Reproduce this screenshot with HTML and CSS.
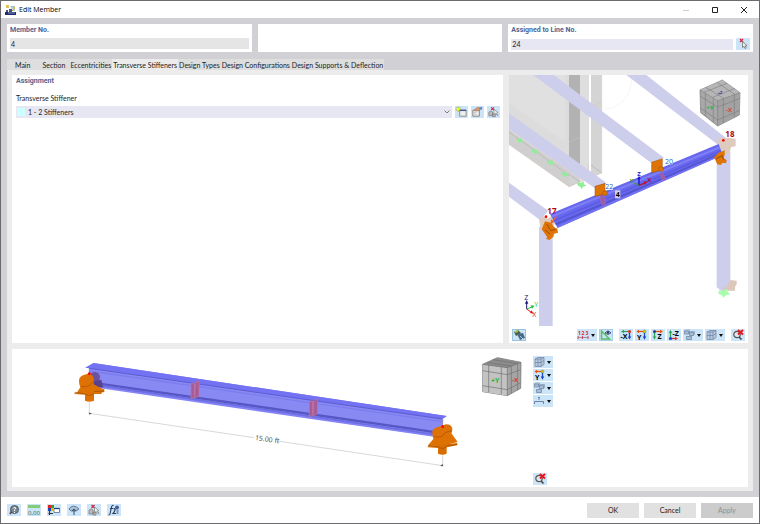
FILE: index.html
```html
<!DOCTYPE html>
<html lang="en">
<head>
<meta charset="utf-8">
<title>Edit Member</title>
<link rel="stylesheet" href="styles.css">
</head>
<body>
<svg class="defs" aria-hidden="true">
  <defs>
    <symbol id="i-pick" viewBox="0 0 14 12"><path d="M4 1l3 3M7 1L4 4" stroke="#d8203a" stroke-width="1.2"/><path d="M6.500 3.500v6l1.500-1.200 1 2.200 1.200-.6-1-2 1.900-.2z" fill="#eee" stroke="#666" stroke-width=".7"/></symbol>
    <symbol id="i-pickobj" viewBox="0 0 14 12"><path d="M2 6l2-1 2 1v4H2zM6 8h3v3H6z" fill="#bbb" stroke="#777" stroke-width=".7"/><path d="M4.500 1l3 3M7.500 1l-3 3" stroke="#d8203a" stroke-width="1.200"/><path d="M7.500 3v6l1.500-1.500 2.500 2.500.7-.8-2-2 1.600-.7z" fill="#eee" stroke="#777" stroke-width=".7"/></symbol>
    <symbol id="i-new" viewBox="0 0 14 12"><path d="M5 4h7v6.500H5z" fill="#eee" stroke="#777" stroke-width=".8"/><path d="M5 3.500h7v1.500H5z" fill="#4a5a98"/><path d="M3.500 0v6M.5 3h6M1.500 1l4 4M5.500 1l-4 4" stroke="#8aa820" stroke-width=".8"/><circle cx="3.500" cy="3" r="1.500" fill="#ff0"/></symbol>
    <symbol id="i-edit" viewBox="0 0 14 12"><path d="M2 4h7v6.500H2z" fill="#eee" stroke="#777" stroke-width=".9"/><path d="M3 6.500h3M3 8.500h3" stroke="#aaa" stroke-width=".6"/><path d="M4 3l3-2 3 .5v2L7 5H4z" fill="#d99a70" stroke="#8a6048" stroke-width=".4"/><path d="M9 1l3-.5v3l-3-.5z" fill="#5a8cc8"/></symbol>
    <symbol id="i-zoomx" viewBox="0 0 14 12"><circle cx="6" cy="5.500" r="3.200" fill="#dce8ee" stroke="#555" stroke-width="1.200"/><path d="M8 8l2.500 2.500" stroke="#444" stroke-width="1.600"/><path d="M7 1l5 4.500M12 1L7 5.500" stroke="#ed1118" stroke-width="1.900"/></symbol>
    <symbol id="i-boxes" viewBox="0 0 14 12"><path d="M1.500 2h4v3h-4zM6.500 3.500h4v3h-4zM3.500 7.500h5v3h-5z" fill="#a9bdd3" stroke="#7189a8" stroke-width=".8"/><path d="M1.500 2l1-1h4v3l-1 1M6.500 3.500l1-1h4v3l-1 1" fill="none" stroke="#7189a8" stroke-width=".6"/></symbol>
    <symbol id="i-cube" viewBox="0 0 14 12"><path d="M2 3l3-1.500h6v7L8 10.500H2zM2 3h6v7.500M8 3l3-1.500M5 3v7.500M2 6.500h6l3-2" fill="#b8c9de" stroke="#7388a8" stroke-width=".8"/></symbol>
    <symbol id="i-yaxis" viewBox="0 0 14 12"><path d="M9 2.500H3" stroke="#e8500c" stroke-width="1.200"/><path d="M4 .7v3.600L1.500 2.500z" fill="#e8500c"/><path d="M9.500 3v5" stroke="#1747cc" stroke-width="1.300"/><path d="M7.700 7.500h3.600L9.500 10.700z" fill="#1747cc"/><circle cx="9.500" cy="2.500" r="1.500" fill="#c0c814" stroke="#776" stroke-width=".4"/><text x="2" y="10.500" class="axis">Y</text></symbol>
  </defs>
</svg>

<div class="window">
  <header class="titlebar">
    <svg class="logo" viewBox="0 0 11 10" aria-hidden="true"><path d="M0 7h11v3H0z" fill="#202c70"/><path d="M1 5h2v2H1zM4 4h3v3H4z" fill="#48557a"/><path d="M1 0h3v3H1z" fill="#d9c25e"/><path d="M5 1h5v5H8z" fill="#a9cbdc"/><path d="M8 1l2 2-3 3" fill="none" stroke="#d6b52c"/><path d="M3 8h7" stroke="#aebadc" stroke-width=".7"/></svg>
    <h1>Edit Member</h1>
    <div class="syskeys">
      <button aria-label="Minimize" disabled><svg viewBox="0 0 8 8"><path d="M1 4.500h6" stroke="#ccc"/></svg></button>
      <button aria-label="Maximize"><svg viewBox="0 0 8 8"><path d="M1.500 1.500h5v5h-5z" fill="none" stroke="#222"/></svg></button>
      <button aria-label="Close"><svg viewBox="0 0 8 8"><path d="M1 1l6 6M7 1L1 7" stroke="#222"/></svg></button>
    </div>
  </header>

  <main class="body">
    <div class="heads">
      <section class="card"><label for="member">Member No.</label><div class="row"><input id="member" class="field readonly" value="4" readonly></div></section>
      <section class="card"></section>
      <section class="card"><label for="line">Assigned to Line No.</label><div class="row"><input id="line" class="field" value="24"><button class="tool" aria-label="Select line"><svg><use href="#i-pick"/></svg></button></div></section>
    </div>

    <nav class="tabs" role="tablist">
      <button role="tab" class="tab wide">Main</button>
      <button role="tab" class="tab medium">Section</button>
      <button role="tab" class="tab">Eccentricities</button>
      <button role="tab" class="tab active" aria-selected="true">Transverse Stiffeners</button>
      <button role="tab" class="tab">Design Types</button>
      <button role="tab" class="tab">Design Configurations</button>
      <button role="tab" class="tab">Design Supports &amp; Deflection</button>
    </nav>

    <div class="page">
      <section class="panel assignment">
        <h2>Assignment</h2>
        <label for="stiffener">Transverse Stiffener</label>
        <div class="row">
          <div class="combo">
            <span class="swatch"></span>
            <select id="stiffener"><option>1 - 2 Stiffeners</option></select>
            <svg class="chevron" viewBox="0 0 6 4" aria-hidden="true"><path d="M.5.5L3 3 5.500.5" fill="none" stroke="#666" stroke-width=".8"/></svg>
          </div>
          <button class="tool narrow" aria-label="New stiffener"><svg><use href="#i-new"/></svg></button>
          <button class="tool narrow" aria-label="Edit stiffener"><svg><use href="#i-edit"/></svg></button>
          <button class="tool narrow" aria-label="Pick stiffener"><svg><use href="#i-pickobj"/></svg></button>
        </div>
      </section>

      <section class="panel model">
        <svg class="scene" viewBox="12 15 717 759" role="img" aria-label="Model view">
          <defs><clipPath id="clip"><path d="M12 15h717v759H12z"/></clipPath></defs>
          <g clip-path="url(#clip)">
            <path d="M12 15h180v335L12 225z" fill="#dcdcdc"/>
            <path d="M12 15h168v200L12 100z" fill="#e0e0e0"/>
            <path d="M12 182l180 122v46L12 222z" fill="#cfcfcf"/>
            <path d="M12 182l180 122 33 28-33 18L12 222z" fill="none" stroke="#dcc4b8" stroke-width="1.500"/>
            <path d="M12 186l180 130" stroke="#b4b4b4" stroke-width="2"/>
            <path d="M192 15h33v320l-33 15z" fill="#b2b2b2"/>
            <path d="M192 260v90l33-15v-50z" fill="#d2d2d2"/>
            <path d="M225 15h27v310l-27 10z" fill="#dedede"/>
            <path d="M258 15h32v294l-32 14z" fill="#d4d4d4"/>
            <path d="M192 350l98-41V15M192 100l33-10M192 215l33-12M258 110l32-12M250 285v55" fill="none" stroke="#d8bfb4" stroke-width="1.500"/>
            <path d="M192 312l33 25M258 285l30 22" stroke="#888"/>
            <path d="M300 118q76-8 82-103" fill="none" stroke="#f0f0f0" stroke-width="2"/>
            <g fill="#90ee98"><path d="M34 205l8 3 8-4 1 7 6 4-9 2-4 4-2-6-6-2z"/><path d="M80 238l8 3 8-4 1 7 6 4-9 2-4 4-2-6-6-2z"/><path d="M126 271l8 3 8-4 1 7 6 4-9 2-4 4-2-6-6-2z"/><path d="M168 306l8 3 8-4 1 7 6 4-9 2-4 4-2-6-6-2z"/><path d="M217 335l10 4 9-5 1 9 8 4-11 3-4 8-4-8-8-3z"/></g>
            <g fill="#cdcdec">
              <path d="M12 130l288 205v20h-30L12 177z"/>
              <path d="M85 15h61l331 248-37 17z"/>
              <path d="M364 15h60l240 190-24 20z"/>
              <path d="M12 338l118 84-25 28L12 380z"/>
              <path d="M635 245h41v405l-22 16-19-14z"/>
              <path d="M102 470h41v298h-41z"/>
            </g>
            <path d="M640 205l30-2 22 3v22l-14 4-5 18-16 4-18-20z" fill="#dfcbbd"/>
            <path d="M670 639l7-9 18 2v11l-5 7v12h-30l-8-8 14-4z" fill="#dcc7bb"/>
            <path d="M642 660l12 3 12-7 2 10 8 7-13 3-8 7-5-8-10-4z" fill="#a8ffab"/>
            <path d="M102 448l14-9 12 7 24-15 8 20-35 35-18-8z" fill="#dfcbbd"/>
            <path d="M135 432l506-210 12 33-495 219z" fill="#6868ee"/>
            <path d="M140 440l504-208" stroke="#8080f6" stroke-width="6"/>
            <path d="M146 452l501-210" stroke="#5c5ce2" stroke-width="5"/>
            <path d="M152 463l499-214" stroke="#5454d0" stroke-width="6"/>
            <path d="M157 471l496-218" stroke="#7474f2" stroke-width="5"/>
            <path d="M286 375l8-3 2 10 6 4v18l-8 3-7-10zM466 312l8-5 1 8 5 4v11h-8l-5-8z" fill="#9a5bb1" stroke="#c0669c"/>
            <g fill="#dd7405" stroke="#9c5206" stroke-width="1.500"><path d="M440 277l32-11v34l-32 8zM270 349l31-9v31l-31 9z"/><circle cx="468" cy="297" r="7"/><circle cx="300" cy="370" r="7"/></g>
            <path d="M627 262l14-14 18-7v14l-4 8 10 8-2 9-10-2-6 7-10-2-5-11zM110 478l10-24 18 4 10 14 9 4 2 12-12 3-2 10-12 9-9-3 2-7z" fill="#dd7405"/>
            <path d="M125 462l12 20 14-4M120 480l15 12M634 266l18-9 4 12" fill="none" stroke="#9a4e02" stroke-width="3"/>
            <path d="M154 440l-12 15" stroke="#f45d27" stroke-width="4"/><path d="M138 448l10 8-11 5z" fill="#f45d27"/>
            <circle cx="655" cy="211" r="4" fill="#f00"/><circle cx="123" cy="440" r="4" fill="#f00"/>
            <path d="M402 346v-20" stroke="#1010d0" stroke-width="4"/><path d="M397 328l5-11 5 11z" fill="#1010d0"/>
            <path d="M402 346l18-7" stroke="#c01032" stroke-width="4"/><path d="M416 334l12 2-9 8z" fill="#c01032"/>
            <path d="M402 346l-17-8" stroke="#44a020" stroke-width="3"/>
            <text x="397" y="319" class="s18 bold" fill="#2222dc">Z</text><text x="374" y="339" class="s18 bold" fill="#309820">Y</text><text x="427" y="337" class="s18 bold" fill="#a01030">X</text>
            <path d="M478 266h25v17h-25zM301 342h23v17h-23z" fill="#fff"/>
            <text x="480" y="282" class="s21" fill="#1868c8">20</text><text x="301" y="358" class="s21" fill="#1868c8">22</text>
            <path d="M330 361h16v24h-16z" fill="#d3d3e6"/><text x="332" y="381" class="s21 bold">4</text>
            <text x="661" y="202" class="s24 bold" fill="#a80c0c">18</text><text x="127" y="431" class="s24 bold" fill="#a80c0c">17</text>
            <path d="M585 60l67-30 53 38-2 67-65 33-51-40z" fill="#a8a8a8" stroke="#777" stroke-width="2"/>
            <path d="M585 60l67-30 53 38-67 24z" fill="#b6b6b6"/>
            <path d="M638 92l67-24-2 67-65 33z" fill="#a2a2a2"/>
            <path d="M585 60l53 32 67-24M638 92v76M601 70v68M625 85v72M655 86v73M688 74v68M585 78l53 33 67-26M587 114l51 36 66-29M602 52l54 33M636 37l53 36M597 67l69-27M623 82l67-27" fill="none" stroke="#747474" stroke-width="1.500"/>
            <text x="604" y="119" class="s18 bold" fill="#29af3f">+Y</text><text x="663" y="126" class="s18 bold" fill="#e63939">-X</text><text x="638" y="72" class="s12 bold" fill="#28289c">+Z</text>
            <path d="M65 717v-18" stroke="#181878" stroke-width="3"/><path d="M60 701l5-11 5 11z" fill="#181878"/>
            <path d="M65 717l16-6" stroke="#22c33a" stroke-width="3"/><path d="M77 706l12 1-8 9z" fill="#22c33a"/>
            <path d="M65 717l14 10" stroke="#e01818" stroke-width="3"/><path d="M79 721l7 10-11-2z" fill="#e01818"/>
            <text x="58" y="691" class="s21" fill="#181878">Z</text><text x="88" y="711" class="s21" fill="#22c33a">Y</text><text x="82" y="741" class="s21" fill="#e01818">X</text>
          </g>
        </svg>
        <div class="toolbar">
          <button class="tool first" aria-label="Synchronize view"><svg viewBox="0 0 14 12"><path d="M.5.5h13v11H.5z" fill="none" stroke="#8fb7d4" stroke-width=".8"/><path d="M2 3l4-2 3 3-5 3z" fill="#4e5c4c"/><path d="M3 3l3-1" stroke="#9fd22b" stroke-width="2"/><path d="M5 5l6-1 2 5-5 2z" fill="#456a87"/><path d="M8 7l3 3" stroke="#adcbe0"/></svg></button>
          <button class="tool drop" aria-label="Numbering"><svg viewBox="0 0 14 12"><path d="M1 8.500h10" stroke="#8c7b88" stroke-width=".8"/><path d="M1 7v3M5.500 7v3M11 7v3" stroke="#d23" stroke-width=".8"/><text x="1" y="6" class="tiny" fill="#d22">1</text><text x="4.500" y="6" class="tiny" fill="#d22">2</text><text x="8.500" y="6" class="tiny" fill="#d22">3</text></svg><i></i></button>
          <button class="tool edge" aria-label="Show dimensions"><svg viewBox="0 0 14 12"><path d="M2.500 2v8h8z" fill="none" stroke="#57bd65" stroke-width="1.500"/><path d="M6 4q3-4 6 0-3 3-6 0z" fill="#d8e1f0" stroke="#3f4d72" stroke-width=".9"/><circle cx="9" cy="3.500" r="1.300" fill="#26306a"/></svg></button>
          <button class="tool group" aria-label="View in X"><svg viewBox="0 0 14 12"><path d="M4 2.500h6" stroke="#2aa456" stroke-width="1.200"/><path d="M5 .8v3.400L2 2.500z" fill="#2aa456"/><path d="M10.500 3v5" stroke="#1747cc" stroke-width="1.300"/><path d="M8.700 7.500h3.600l-1.800 3z" fill="#1747cc"/><circle cx="10.500" cy="2.500" r="1.600" fill="#d83a28"/><text x="1.500" y="10" class="axis">-X</text></svg></button>
          <button class="tool" aria-label="View in Y"><svg><use href="#i-yaxis"/></svg></button>
          <button class="tool" aria-label="View in Z"><svg viewBox="0 0 14 12"><path d="M4 2.500h6" stroke="#e8500c" stroke-width="1.200"/><path d="M9 .7v3.600l3-1.800z" fill="#e8500c"/><path d="M3.500 3v5" stroke="#2aa456" stroke-width="1.300"/><path d="M1.700 7.500h3.600l-1.800 3z" fill="#2aa456"/><circle cx="3.500" cy="2.500" r="1.500" fill="#25408f"/><text x="6.500" y="10" class="axis">Z</text></svg></button>
          <button class="tool" aria-label="View against Z"><svg viewBox="0 0 14 12"><path d="M3.500 9V4" stroke="#2aa456" stroke-width="1.300"/><path d="M1.700 4h3.600L3.500 1z" fill="#2aa456"/><path d="M4 9.500h6" stroke="#d83a28" stroke-width="1.300"/><path d="M8 7.800v3.400l3-1.700z" fill="#d83a28"/><circle cx="3.500" cy="9.500" r="1.600" fill="#1747cc"/><text x="5.500" y="6.500" class="axis">-Z</text></svg></button>
          <button class="tool drop" aria-label="Display options"><svg><use href="#i-boxes"/></svg><i></i></button>
          <button class="tool drop" aria-label="Box options"><svg><use href="#i-cube"/></svg><i></i></button>
          <button class="tool group" aria-label="Reset zoom"><svg><use href="#i-zoomx"/></svg></button>
        </div>
      </section>

      <section class="panel preview">
        <svg class="scene" viewBox="-144 12 1563 414" role="img" aria-label="Member preview">
          <path d="M88 68l12-14 1060 159-12 9v52h-28L88 122z" fill="#8989f3"/>
          <path d="M75 68l25-14 1060 159-14 9L88 70z" fill="#7272f3"/>
          <path d="M88 70l1058 152" stroke="#5c5cd2" stroke-width="3"/>
          <path d="M88 78l1060 152" stroke="#7c7cee" stroke-width="4"/>
          <path d="M90 112l1040 150" stroke="#5656c4" stroke-width="7"/>
          <path d="M90 118l1036 151" stroke="#6e6ee4" stroke-width="6"/>
          <path d="M90 123l1032 150" stroke="#8484f6" stroke-width="5"/>
          <g fill="#a95a99" stroke="#c47597" stroke-width="2"><path d="M393 117l10-3v43l-10 5zM408 112l9-5v46l-13 6 2-40z"/><path d="M748 171l10-3v43l-10 5zM763 166l9-5v46l-13 6 2-40z"/></g>
          <path d="M88 68v20M1148 222v20" stroke="#77a" stroke-width="2"/>
          <circle cx="104" cy="97" r="16" fill="#6d519c"/>
          <path d="M86 112l38-8 6 24-42-6z" fill="#5a418f"/>
          <path d="M57 108q0-12 12-17l18-6q12 4 14 16v17l28 15-5 14H48l13-20q-4-8-4-19z" fill="#de7104"/>
          <path d="M63 125q24 3 34-14" fill="none" stroke="#b95b04" stroke-width="3"/>
          <path d="M43 145l90-13v9l-31 5v21q-14 6-27 0v-18l-32-2z" fill="#dc7102"/><path d="M44 142l30 4M102 140l30-2M77 148q12 8 24-2" stroke="#9d4f02" stroke-width="2" fill="none"/>
          <circle cx="88" cy="86" r="4" fill="red"/>
          <path d="M1117 267q-2-16 14-20l27-9q18 0 19 14 0 9-3 13l19 26-45 11h-45l17-20z" fill="#de7104"/>
          <path d="M1123 275q24 6 32-12l20-6" fill="none" stroke="#b95b04" stroke-width="3"/>
          <path d="M1103 304l89-10v7l-32 6v19q-13 6-26 0v-17l-31-2z" fill="#d86e02"/><path d="M1104 301l31 4M1160 303l31-5M1136 308q12 6 24-2" stroke="#9d4f02" stroke-width="2" fill="none"/>
          <circle cx="1148" cy="245" r="4" fill="red"/>
          <path d="M88 172v33l494 73M652 288l496 74v-32" fill="none" stroke="#c4c4c4" stroke-width="2"/>
          <path d="M86 203l10 1-8 5zM1150 364l-10-1 8-6z" fill="#555"/>
          <text x="584" y="285" class="s21" transform="rotate(8 584 285)" fill="#444">15.00 ft</text>
          <path d="M1268 58l44-20 71 14-1 78-40 22-74-12z" fill="#a5a5a5" stroke="#666" stroke-width="2"/>
          <path d="M1268 58l74 10v84l-74-12z" fill="#c3c3c3"/><path d="M1268 58l44-20 71 14-41 16z" fill="#8c8c8c"/>
          <path d="M1268 58l74 10 41-16M1342 68v84M1286 60v82M1324 66v82M1354 64v82M1373 56v80M1268 77l74 12 40-15M1268 122l74 12 40-21M1282 52l72 11M1298 44l74 12" fill="none" stroke="#707070" stroke-width="2"/>
          <text x="1293" y="114" class="s21 bold" fill="#27b33c">+Y</text><text x="1356" y="110" class="s18 bold" fill="#dd3030">-X</text>
        </svg>
        <div class="sidebar">
          <button class="tool drop" aria-label="Box options"><svg><use href="#i-cube"/></svg><i></i></button>
          <button class="tool drop" aria-label="View direction"><svg><use href="#i-yaxis"/></svg><i></i></button>
          <button class="tool drop" aria-label="Display options"><svg><use href="#i-boxes"/></svg><i></i></button>
          <button class="tool drop" aria-label="Dimension options"><svg viewBox="0 0 14 12"><path d="M1.500 9V6.500h9V9M6 5V3M5 2.500h2" fill="none" stroke="#6b84a6"/></svg><i></i></button>
          <button class="tool last" aria-label="Reset zoom"><svg><use href="#i-zoomx"/></svg></button>
        </div>
      </section>
    </div>
  </main>

  <footer class="footer">
    <div class="helpers">
      <button class="tool" aria-label="Help"><svg viewBox="0 0 14 12"><path d="M3 10l2-3" stroke="#556" stroke-width="2"/><circle cx="7.500" cy="5.500" r="4" fill="#7b8790" stroke="#3b444b" stroke-width=".8"/><path d="M6 4.500q1-2 2.500-.8Q9 5 7.500 5.800V7M7.500 8v1" fill="none" stroke="#fff" stroke-width="1"/></svg></button>
      <button class="tool" aria-label="Units"><svg viewBox="0 0 14 12"><path d="M1 1h12v3H1z" fill="#85cc77"/><text x="1" y="10.500" class="unit">0,00</text></svg></button>
      <button class="tool" aria-label="Colors"><svg viewBox="0 0 14 12"><path d="M1 1h3v3H1z" fill="#e62121"/><path d="M4 1h3v3H4z" fill="#28a52c"/><path d="M1 4h3v3H1z" fill="#1f42be"/><path d="M4 4h2v3H4z" fill="#d5c300"/><path d="M2.500 7v4M1.500 9.500H6" stroke="#333" stroke-width="1.200"/><path d="M7 4.500h5.500v4H7z" fill="#fff" stroke="#5a6a95" stroke-width=".8"/><path d="M7 4.500h5.500" stroke="#213584" stroke-width="1.200"/></svg></button>
      <button class="tool" aria-label="Display"><svg viewBox="0 0 14 12"><path d="M2 5q4-6 10 0l-3 2H4z" fill="#a7bfd1" stroke="#4a6a84" stroke-width=".8"/><path d="M7 5v6M5 7l2-2 2 2" fill="none" stroke="#35506b"/></svg></button>
      <button class="tool" aria-label="Pick object"><svg><use href="#i-pickobj"/></svg></button>
      <button class="tool" aria-label="Functions"><svg viewBox="0 0 14 12"><path d="M6.500 1.500Q5 1 4.500 3L3 10Q2.800 11 1.500 11M3 4.500h3M6.500 5q2-1 1.500 1T6 9.500h3" fill="none" stroke="#284060" stroke-width="1.100"/><circle cx="10" cy="3.500" r="2" fill="#485b95"/><path d="M9.500 7h2M9.500 9h2" stroke="#446"/></svg></button>
    </div>
    <div class="actions"><button>OK</button><button>Cancel</button><button disabled>Apply</button></div>
  </footer>
</div>
</body>
</html>
```
FILE: styles.css
```css
* { box-sizing: border-box; }
body { margin: 0; font: 7px/8px Lato, "Open Sans", sans-serif; color: #1c1c1c; background: #fff; }
button, input, select { font: inherit; color: inherit; border: 0; margin: 0; padding: 0; border-radius: 0; background: none; }
svg { display: block; }
.defs { position: absolute; width: 0; height: 0; }
.window { min-height: 100vh; display: flex; flex-direction: column; border: 1px solid #6b6b6e; }

.titlebar { display: flex; align-items: center; height: 17px; padding-left: 4px; gap: 3px; }
.logo { width: 11px; height: 10px; }
h1 { margin: 0; font: 400 7px/10px "Open Sans", sans-serif; flex: 1; color: #000; }
.syskeys { display: flex; gap: 5px; padding-right: 3px; }
.syskeys button { width: 24px; height: 17px; display: grid; place-items: center; }
.syskeys svg { width: 8px; height: 8px; }

.body { flex: 1; display: flex; flex-direction: column; padding: 6px; background: #d0d0d5; }
.heads { display: grid; grid-template-columns: repeat(3, 1fr); gap: 6px; }
.card { height: 28px; padding: 2px 3px 3px; background: #fff; }
.card label, h2 { display: block; margin: 0; font: 700 7px/8px Roboto, sans-serif; color: #50638f; }
.card label { margin-bottom: 4px; }
.row { display: flex; gap: 3px; align-items: center; }
.field { flex: 1; min-width: 0; height: 11px; padding: 0 1px; background: #e7e7f3; }
.readonly { background: #e5e5e5; }

.tool { width: 14px; height: 12px; flex: none; display: flex; align-items: center; background: #cce4f7; }
.tool svg { width: 14px; height: 12px; flex: none; }
.narrow { width: 13px; }
.narrow svg { width: 13px; }
.drop { width: 20px; }
.drop i { border: 2px solid transparent; border-top: 3px solid #111; border-bottom: 0; }
.edge { outline: 1px solid #a5cfec; outline-offset: -1px; }

.tabs { display: flex; height: 11px; margin-top: 7px; align-self: flex-start; background: #dededf; }
.tab { padding: 0 1px; white-space: nowrap; }
.tab.wide { padding: 0 8px; }
.tab.medium { padding: 0 4px; }
.tab.active { background: #ececec; }

.page { flex: 1; display: grid; grid-template-columns: 491fr 239fr; grid-template-rows: 1fr 138px; gap: 6px; padding: 5px 5px 4px; background: #ececec; }
.panel { background: #fff; min-width: 0; min-height: 0; }
.assignment { padding: 2px 3px 0 4px; }
.assignment label { display: block; margin: 9px 0 4px; }
.combo { flex: 1; display: flex; align-items: center; height: 12px; padding: 0 2px 0 1px; gap: 3px; background: #e7e7f3; }
.swatch { width: 8px; height: 8px; background: #cff; }
.combo select { flex: 1; appearance: none; height: 12px; }
.chevron { width: 6px; height: 4px; }

.model { display: flex; flex-direction: column; }
.model .scene { flex: 1; width: 100%; min-height: 0; }
.toolbar { display: flex; gap: 2px; padding: 1px 3px 2px; }
.toolbar .first { margin-right: auto; }
.toolbar .group { margin-left: 4px; }

.preview { grid-column: 1 / -1; display: grid; grid-template-columns: 521fr 215fr; }
.preview .scene { width: 100%; height: 100%; }
.sidebar { display: flex; flex-direction: column; gap: 1px; padding: 7px 0 2px; }
.sidebar .last { margin-top: auto; }

.footer { display: flex; align-items: center; justify-content: space-between; height: 26px; padding: 0 6px; }
.helpers { display: flex; gap: 6px; }
.actions { display: flex; gap: 5px; }
.actions button { width: 52px; height: 15px; background: #e1e1e1; }
.actions button:disabled { background: #ccc; color: #909090; }

svg text { font-family: "Open Sans", sans-serif; }
.s24 { font-size: 24px; }
.s21 { font-size: 21px; }
.s18 { font-size: 18px; }
.s12 { font-size: 12px; }
.bold { font-weight: 700; }
.axis { font-size: 7px; font-weight: 700; }
.tiny { font-size: 5px; font-weight: 700; }
.unit { font-size: 6px; fill: #276a4f; }
```
